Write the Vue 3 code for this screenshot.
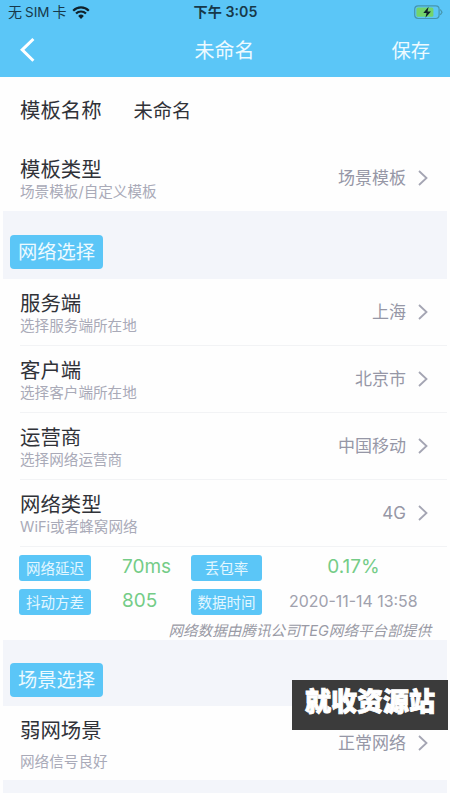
<script setup>
const networkRows = [
  { title: '服务端', sub: '选择服务端所在地', value: '上海' },
  { title: '客户端', sub: '选择客户端所在地', value: '北京市' },
  { title: '运营商', sub: '选择网络运营商', value: '中国移动' },
  { title: '网络类型', sub: 'WiFi或者蜂窝网络', value: '4G' },
]
</script>

<template>
  <div class="screen">
    <header class="header">
      <div class="status">
        <div class="carrier">
          <span>无<span class="latin sim">SIM</span>卡</span>
          <svg class="wifi" viewBox="0 0 18 13">
            <path d="M1.2 4.7 A11 11 0 0 1 16.8 4.7" />
            <path d="M4 7.6 A7 7 0 0 1 14 7.6" />
            <path class="dot" d="M6.2 9.9 A4 4 0 0 1 11.8 9.9 L9 12.9 Z" />
          </svg>
        </div>
        <div class="time">下午<span class="latin"> 3:05</span></div>
        <div class="power">
          <svg class="battery" viewBox="0 0 29 15">
            <rect class="case" x="0.7" y="0.9" width="24.4" height="12.6" rx="3.4" />
            <path class="case" d="M26.3 4.5 L28 7.2 L26.3 9.9" />
            <rect class="charge" x="2.4" y="2.6" width="17" height="9.2" rx="1.5" />
            <path class="bolt" d="M14.6 1.8 L9.3 8 H12.6 L11.4 12.8 L17 6.5 H13.5 Z" />
          </svg>
        </div>
      </div>
      <nav class="nav">
        <svg class="back" viewBox="0 0 16 26"><path d="M14.4 2 L3.2 12.8 L14.4 23.7" /></svg>
        <h1>未命名</h1>
        <span class="save">保存</span>
      </nav>
    </header>

    <main>
      <div class="name-row"><span class="title">模板名称</span><span class="name">未命名</span></div>
      <div class="row">
        <div class="labels"><span class="title">模板类型</span><span class="sub">场景模板/自定义模板</span></div>
        <span class="value">场景模板</span>
        <svg class="chevron" viewBox="0 0 10 16"><path d="M1 1 L8.5 8 L1 15" /></svg>
      </div>

      <div class="section first"><span class="tag">网络选择</span></div>

      <div v-for="row in networkRows" :key="row.title" class="row lined">
        <div class="labels"><span class="title">{{ row.title }}</span><span class="sub">{{ row.sub }}</span></div>
        <span class="value">{{ row.value }}</span>
        <svg class="chevron" viewBox="0 0 10 16"><path d="M1 1 L8.5 8 L1 15" /></svg>
      </div>

      <div class="metrics">
        <div class="grid">
          <span class="chip">网络延迟</span><span class="num">70ms</span>
          <span class="chip">丢包率</span><span class="num center">0.17%</span>
          <span class="chip">抖动方差</span><span class="num">805</span>
          <span class="chip">数据时间</span><span class="date">2020-11-14 13:58</span>
        </div>
        <p class="note">网络数据由腾讯公司TEG网络平台部提供</p>
      </div>

      <div class="section"><span class="tag">场景选择</span></div>

      <div class="row scene">
        <div class="labels"><span class="title">弱网场景</span><span class="sub">网络信号良好</span></div>
        <span class="value">正常网络</span>
        <svg class="chevron" viewBox="0 0 10 16"><path d="M1 1 L8.5 8 L1 15" /></svg>
      </div>
      <div class="band"></div>
    </main>
    <div class="watermark">就收资源站</div>
  </div>
</template>

<style>
body { background: #fefefe; overflow: hidden; }
</style>

<style scoped>
.screen {
  position: relative;
  width: 450px;
  height: 800px;
  overflow: hidden;
  background: #fefefe;
  color: #303238;
  font-family: Inter, "Noto Sans CJK SC", sans-serif;
}
.header { height: 77px; background: #5bc6f7; }
.status {
  display: grid;
  grid-template-columns: 1fr auto 1fr;
  align-items: center;
  height: 24px;
  padding: 0 7px 0 8px;
  color: #17394a;
  font-size: 14px;
  line-height: 24px;
}
.carrier { display: flex; align-items: center; gap: 6px; }
.latin { white-space: pre; }
.sim { margin: 0 3px; font-size: 13.5px; }
.wifi { width: 18px; height: 13px; fill: none; stroke: #10212a; stroke-width: 2.2; }
.wifi .dot { fill: #10212a; stroke: none; }
.time { font-size: 14.2px; font-weight: 600; }
.power { display: flex; justify-content: flex-end; }
.battery { width: 29px; height: 15px; }
.case { fill: none; stroke: #4696ae; stroke-width: 1.2; }
.charge { fill: #73d36c; }
.bolt { fill: #10212a; }
.nav {
  display: grid;
  grid-template-columns: 1fr auto 1fr;
  align-items: center;
  height: 52px;
  padding: 0 20px 0 19px;
  color: #edfaff;
}
.back { width: 16px; height: 26px; fill: none; stroke: #fff; stroke-width: 3; }
h1 { margin: 2px 0 0; font-size: 20px; font-weight: 400; line-height: 30px; }
.save { justify-self: end; margin-top: 2px; font-size: 19.3px; line-height: 30px; }
.name-row {
  display: flex;
  align-items: center;
  gap: 32px;
  height: 67px;
  padding-left: 20px;
}
.title { font-size: 20.4px; line-height: 26px; }
.name { font-size: 19.3px; line-height: 28px; padding-top: 1px; }
.row {
  display: flex;
  align-items: center;
  box-sizing: border-box;
  height: 67px;
  padding: 0 22px 0 20px;
}
.lined {
  margin-right: 3px;
  padding-right: 19px;
  padding-bottom: 1px;
  background: linear-gradient(#f2f3f5, #f2f3f5) 20px 100% / 100% 1px no-repeat;
}
.labels { display: flex; flex: 1; flex-direction: column; padding-top: 3px; }
.sub { color: #a9aab8; font-size: 14.6px; line-height: 19px; }
.value { color: #9697a6; font-size: 17px; line-height: 24px; }
.chevron {
  width: 10px;
  height: 16px;
  margin-left: 12px;
  fill: none;
  stroke: #a4a5b3;
  stroke-width: 1.8;
}
.section {
  display: flex;
  align-items: center;
  height: 66px;
  margin: 0 3px;
  padding-left: 7px;
  background: #f3f5fa;
}
.section.first { height: 68px; }
.section .tag { margin-top: 14px; }
.tag {
  width: 93px;
  height: 34px;
  border-radius: 4px;
  background: #5bc6f7;
  color: #edfaff;
  font-size: 19.3px;
  line-height: 35px;
  text-align: center;
}
.metrics { height: 93px; padding: 8px 19px 0; box-sizing: border-box; }
.grid {
  display: grid;
  grid-template-columns: 72px 100px 71px 27px 129px;
  grid-auto-rows: 26px;
  row-gap: 8px;
}
.chip {
  border-radius: 3px;
  background: #5bc6f7;
  color: #e3f7ff;
  font-size: 14.5px;
  line-height: 27px;
  text-align: center;
}
.num { margin-left: 31px; color: #74cc87; font-size: 19px; line-height: 24px; }
.num.center { grid-column: 5; margin-left: 0; text-align: center; }
.date { grid-column: 5; color: #a0a1ad; font-size: 15.9px; line-height: 26px; white-space: nowrap; }
.note {
  margin: 6px 0 0;
  color: #999aa5;
  font-size: 14.6px;
  font-style: italic;
  line-height: 20px;
  text-align: right;
  white-space: nowrap;
}
.scene { height: 74px; }
.scene .sub { margin-top: 9px; }
.scene .labels { padding-top: 4px; }
.band { height: 13px; margin: 0 3px; background: #f3f5fa; }
.watermark {
  position: absolute;
  top: 680px;
  left: 292px;
  width: 156px;
  height: 50px;
  background: #3b3b3b;
  color: #fff;
  font-size: 26px;
  font-weight: 900;
  line-height: 43px;
  text-align: center;
  -webkit-text-stroke: 0.9px #fff;
}
</style>
